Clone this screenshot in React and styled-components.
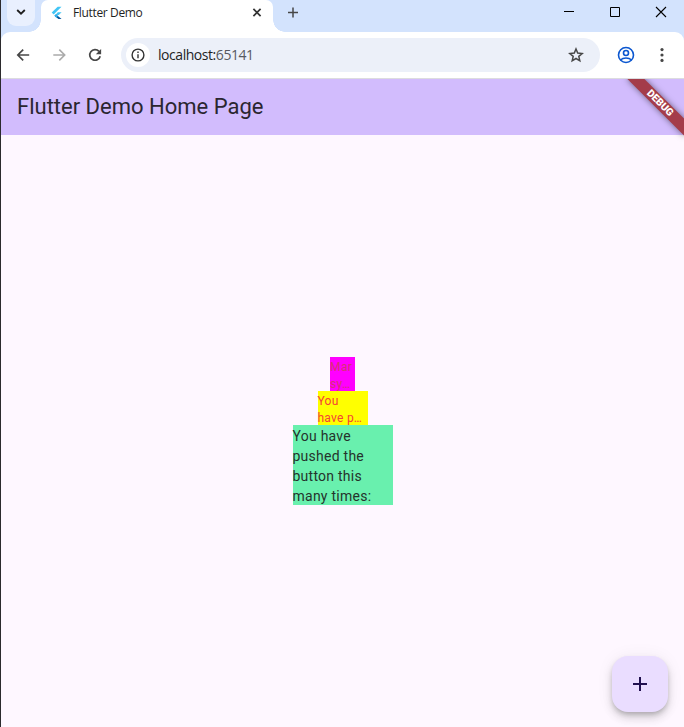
import React from "react";
import styled, { createGlobalStyle } from "styled-components";

const Global = createGlobalStyle`
  * { box-sizing: border-box; }
  body { margin: 0; overflow: hidden; }
  button { border: 0; padding: 0; background: none; font: inherit; }
  svg { display: block; flex: none; }
`;

const Window = styled.div`
  width: 684px;
  height: 727px;
  display: flex;
  flex-direction: column;
  overflow: hidden;
  border-left: 1px solid #2b2a2d;
  background: #d3e3fd;
  font-family: "Open Sans", sans-serif;
`;

const TabStrip = styled.header`
  height: 32px;
  flex: none;
  display: flex;
  background: #d3e3fd;
`;

const TabSearch = styled.button`
  width: 28px;
  height: 26px;
  margin-left: 6px;
  display: flex;
  justify-content: center;
  padding-top: 8px;
  border-radius: 0 0 9px 9px;
  background: #e9f0fe;
`;

const Tab = styled.div`
  position: relative;
  width: 232px;
  height: 32px;
  margin-left: 6px;
  padding: 0 10px 7px;
  display: flex;
  align-items: center;
  border-radius: 7px 7px 0 0;
  background: #fff;
  &::before, &::after {
    content: "";
    position: absolute;
    bottom: 0;
    width: 12px;
    height: 12px;
  }
  &::before {
    left: -12px;
    background: radial-gradient(circle at 0 0, transparent 11.5px, #fff 12px);
  }
  &::after {
    right: -12px;
    background: radial-gradient(circle at 100% 0, transparent 11.5px, #fff 12px);
  }
`;

const TabTitle = styled.span`
  flex: 1;
  margin-left: 9px;
  font-size: 12px;
  letter-spacing: -0.35px;
  line-height: 16px;
  color: #1f1f1f;
`;

const NewTab = styled.button`
  width: 14px;
  height: 25px;
  margin-left: 13px;
  display: flex;
  align-items: center;
  justify-content: center;
`;

const WindowControls = styled.div`
  margin-left: auto;
  padding-right: 17px;
  height: 24px;
  display: flex;
  align-items: center;
  gap: 34px;
`;

const Toolbar = styled.div`
  height: 47px;
  flex: none;
  display: flex;
  align-items: center;
  padding: 0 14px;
  border-radius: 9px 9px 0 0;
  border-bottom: 1px solid #dcdcdf;
  background: #fff;
`;

const NavGroup = styled.nav`
  display: flex;
  gap: 20px;
`;

const AddressBar = styled.div`
  width: 479px;
  height: 34px;
  margin-left: 18px;
  padding: 0 16px 0 5px;
  display: flex;
  align-items: center;
  border-radius: 17px;
  background: #ecf0f9;
`;

const SiteInfo = styled.span`
  width: 24px;
  height: 24px;
  display: grid;
  place-items: center;
  border-radius: 50%;
  background: #fff;
`;

const Url = styled.span`
  flex: 1;
  margin-left: 8px;
  font-size: 14px;
  letter-spacing: -0.45px;
  line-height: 20px;
  color: #1f1f1f;
`;

const Port = styled.span`
  color: #56595f;
`;

const ProfileButton = styled.button`
  margin-left: 17px;
`;

const MenuButton = styled.button`
  margin-left: auto;
`;

const Page = styled.main`
  position: relative;
  flex: 1;
  display: flex;
  flex-direction: column;
  overflow: hidden;
  background: #fef7ff;
  font-family: Roboto, sans-serif;
`;

const AppBar = styled.div`
  height: 56px;
  flex: none;
  display: flex;
  align-items: center;
  padding: 0 16px;
  background: #d2bcfd;
`;

const Title = styled.h1`
  margin: 0;
  font-size: 22px;
  font-weight: 400;
  line-height: 28px;
  color: #2b2630;
`;

const DebugBanner = styled.div`
  position: absolute;
  top: 28px;
  right: -40px;
  width: 80px;
  height: 12px;
  transform-origin: 40px -28px;
  transform: rotate(45deg);
  box-shadow: 0 0 6px rgba(0, 0, 0, 0.5);
  background: #a43c4a;
  color: #fff;
  font-size: 10.2px;
  font-weight: 900;
  line-height: 12px;
  text-align: center;
`;

const Body = styled.section`
  flex: 1;
  display: flex;
  flex-direction: column;
  align-items: center;
  justify-content: center;
`;

const TextBox = styled.div`
  width: ${(p) => p.$width}px;
  height: ${(p) => p.$lines * p.$leading}px;
  padding-top: ${(p) => p.$inset}px;
  background: ${(p) => p.$fill};
  color: ${(p) => p.$ink};
  font-size: ${(p) => p.$size}px;
  line-height: ${(p) => p.$leading}px;
  letter-spacing: ${(p) => p.$tracking}px;
  white-space: nowrap;
`;

const Line = styled.div``;

const Fab = styled.button`
  position: absolute;
  right: 16px;
  bottom: 15px;
  width: 56px;
  height: 56px;
  display: grid;
  place-items: center;
  border-radius: 16px;
  background: #eaddff;
  box-shadow: 0 3px 5px -1px rgba(0, 0, 0, 0.2), 0 6px 10px rgba(0, 0, 0, 0.14), 0 1px 18px rgba(0, 0, 0, 0.06);
`;

const FlutterLogo = () => (
  <svg width="13" height="14" viewBox="0 0 13 14">
    <path d="M8.2 0.8H12L4.2 8.5 2.2 6.6Z" transform="translate(-1.5 0)" fill="#42c5f5" />
    <path d="M6.8 6.3H10.6L7.8 9.1 5.9 9.1 5 8.2Z" fill="#42c5f5" />
    <path d="M5 8.2 6.9 10.1 10.6 13H7.4L3.5 9.8Z" fill="#08589c" />
    <path d="M5 8.2 6.9 10.1 5.3 11.7 3.4 9.8Z" fill="#29b0ee" />
  </svg>
);

const BackIcon = () => (
  <svg width="16" height="16" viewBox="0 0 16 16" fill="none" stroke="#474747" strokeWidth="1.7">
    <path d="M14.2 8H3M8.2 2.6 2.8 8l5.4 5.4" />
  </svg>
);

const ForwardIcon = () => (
  <svg width="16" height="16" viewBox="0 0 16 16" fill="none" stroke="#ababab" strokeWidth="1.6">
    <path d="M2.3 8h11M8.3 2.6 13.7 8l-5.4 5.4" />
  </svg>
);

const ReloadIcon = () => (
  <svg width="16" height="16" viewBox="0 0 16 16" fill="none" stroke="#474747" strokeWidth="1.7">
    <path d="M13.2 9.2A5.3 5.3 0 1 1 12 4.4" />
    <path d="M14.1 1.9V7.2H8.8Z" fill="#474747" stroke="none" />
  </svg>
);

const boxes = [
  { width: 25, lines: ["Mar", "sy…"], fill: "#ff00ff", ink: "#d63372", size: 12, leading: 17, tracking: 0.4, inset: 2 },
  { width: 50, lines: ["You", "have p…"], fill: "#ffff00", ink: "#f44336", size: 12, leading: 17, tracking: 0.25, inset: 2 },
  { width: 100, lines: ["You have", "pushed the", "button this", "many times:"], fill: "#69f0ae", ink: "#25332c", size: 14, leading: 20, tracking: 0.25, inset: 1 },
];

export default function App() {
  return (
    <>
      <Global />
      <Window>
        <TabStrip>
          <TabSearch aria-label="Search tabs">
            <svg width="10" height="8" viewBox="0 0 10 8" fill="none" stroke="#1f1f1f" strokeWidth="1.8">
              <path d="M1.2 2 5 5.7 8.8 2" />
            </svg>
          </TabSearch>
          <Tab>
            <FlutterLogo />
            <TabTitle>Flutter Demo</TabTitle>
            <svg width="12" height="12" viewBox="0 0 12 12" stroke="#333" strokeWidth="1.7">
              <path d="M2.4 1.9 9.6 9.1M9.6 1.9 2.4 9.1" />
            </svg>
          </Tab>
          <NewTab aria-label="New tab">
            <svg width="12" height="12" viewBox="0 0 12 12" stroke="#474747" strokeWidth="1.5">
              <path d="M6 .5v10M1 5.5h10" />
            </svg>
          </NewTab>
          <WindowControls>
            <svg width="12" height="12" viewBox="0 0 12 12" stroke="#000">
              <path d="M1 5.5h10" />
            </svg>
            <svg width="12" height="12" viewBox="0 0 12 12" fill="none" stroke="#000">
              <path d="M1.5 1.5h9v9h-9z" />
            </svg>
            <svg width="12" height="12" viewBox="0 0 12 12" stroke="#000" strokeWidth="1.1">
              <path d="M1 1l10 10M11 1 1 11" />
            </svg>
          </WindowControls>
        </TabStrip>
        <Toolbar>
          <NavGroup>
            <BackIcon />
            <ForwardIcon />
            <ReloadIcon />
          </NavGroup>
          <AddressBar>
            <SiteInfo>
              <svg width="14" height="14" viewBox="0 0 14 14" fill="none" stroke="#333" strokeWidth="1.4">
                <circle cx="7" cy="7" r="5.9" />
                <path d="M7 6.3v4M7 3.6v1.5" />
              </svg>
            </SiteInfo>
            <Url>localhost:<Port>65141</Port></Url>
            <svg width="16" height="16" viewBox="0 0 16 16" fill="none" stroke="#474747" strokeWidth="1.5">
              <path d="M8 2 9.7 6.1 14.2 6.5 10.8 9.4 11.8 13.8 8 11.5 4.2 13.8 5.2 9.4 1.8 6.5 6.3 6.1Z" />
            </svg>
          </AddressBar>
          <ProfileButton aria-label="Profile">
            <svg width="18" height="18" viewBox="0 0 18 18" fill="none" stroke="#0b57d0" strokeWidth="1.6">
              <circle cx="9" cy="9" r="7.5" />
              <circle cx="9" cy="7" r="2.5" />
              <path d="M3.3 14C6.5 11.4 11.5 11.4 14.7 14" />
            </svg>
          </ProfileButton>
          <MenuButton aria-label="Menu">
            <svg width="16" height="16" viewBox="0 0 16 16" fill="#474747">
              <circle cx="8" cy="2.6" r="1.6" />
              <circle cx="8" cy="8" r="1.6" />
              <circle cx="8" cy="13.4" r="1.6" />
            </svg>
          </MenuButton>
        </Toolbar>
        <Page>
          <AppBar>
            <Title>Flutter Demo Home Page</Title>
          </AppBar>
          <DebugBanner>DEBUG</DebugBanner>
          <Body>
            {boxes.map((b) => (
              <TextBox key={b.width} $width={b.width} $lines={b.lines.length} $fill={b.fill} $ink={b.ink} $size={b.size} $leading={b.leading} $tracking={b.tracking} $inset={b.inset}>
                {b.lines.map((line) => <Line key={line}>{line}</Line>)}
              </TextBox>
            ))}
          </Body>
          <Fab aria-label="Increment">
            <svg width="24" height="24" viewBox="0 0 24 24" fill="#21104f">
              <path d="M19 13h-6v6h-2v-6H5v-2h6V5h2v6h6z" />
            </svg>
          </Fab>
        </Page>
      </Window>
    </>
  );
}
